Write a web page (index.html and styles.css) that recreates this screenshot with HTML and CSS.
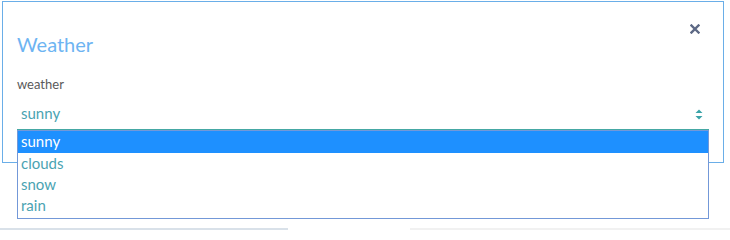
FILE: index.html
```html
<!DOCTYPE html>
<html>
<head>
<meta charset="utf-8">
<link rel="stylesheet" href="styles.css">
</head>
<body>
<div class="page">
  <div class="modal">
    <div class="modal-head">
      <h2 class="title">Weather</h2>
      <button class="close" aria-label="close">
        <svg width="10" height="10" viewBox="0 0 10 10"><path d="M1.5 1.5 L8.5 8.5 M8.5 1.5 L1.5 8.5" stroke="#5d6985" stroke-width="2.4" stroke-linecap="square"/></svg>
      </button>
    </div>
    <label class="label">weather</label>
    <div class="select">
      <span class="value">sunny</span>
      <svg class="arrows" width="8" height="11" viewBox="0 0 8 11"><path d="M4 0.5 L7.5 4 L0.5 4 Z M0.5 7 L7.5 7 L4 10.5 Z" fill="#3aa3a8"/></svg>
      <ul class="options">
        <li class="opt selected">sunny</li>
        <li class="opt">clouds</li>
        <li class="opt">snow</li>
        <li class="opt">rain</li>
      </ul>
    </div>
  </div>
  <div class="strip">
    <span class="strip-a"></span>
    <span class="strip-b"></span>
  </div>
</div>
</body>
</html>
```
FILE: styles.css
```css
* { box-sizing: border-box; }
html, body { margin: 0; padding: 0; background: #fff; }
body { font-family: Lato, "Open Sans", sans-serif; }
.page {
  height: 230px;
  display: flex;
  flex-direction: column;
  padding: 1px 0 0 2px;
}
.modal {
  width: 722px;
  height: 162px;
  border: 1px solid #6aaee8;
  padding: 0 14px 0 14px;
  display: flex;
  flex-direction: column;
}
.modal-head {
  display: flex;
  justify-content: space-between;
  align-items: flex-start;
}
.title {
  margin: 30px 0 0 0;
  font-weight: 400;
  font-size: 20px;
  line-height: 24px;
  color: #6db4f2;
}
.close {
  margin: 22px 9px 0 0;
  padding: 0;
  border: 0;
  background: none;
  width: 10px;
  height: 10px;
  display: flex;
}
.label {
  margin-top: 20px;
  font-size: 13px;
  line-height: 16px;
  color: #5a5a5a;
}
.select {
  position: relative;
  margin-top: 12px;
  height: 26px;
  border-bottom: 1px solid #45a8a4;
  display: flex;
  align-items: flex-start;
  justify-content: space-between;
  padding: 0 6px 0 4px;
}
.value {
  font-size: 15px;
  line-height: 18px;
  color: #4aa3b2;
}
.arrows { margin-top: 5px; }
.options {
  position: absolute;
  left: 0;
  top: 26px;
  width: 692px;
  margin: 0;
  padding: 0 0 2px 0;
  list-style: none;
  background: #fff;
  border: 1px solid #7398d8;
}
.opt {
  height: 21px;
  line-height: 21px;
  padding-left: 3px;
  font-size: 15px;
  color: #4aa3b2;
}
.opt.selected {
  height: 22px;
  background: #1e90ff;
  color: #fff;
}
.strip {
  margin-top: auto;
  height: 2px;
  margin-left: -2px;
  display: flex;
  justify-content: space-between;
}
.strip-a { width: 288px; background: #d9e1e9; }
.strip-b { width: 320px; background: #f1f1f1; }
```
